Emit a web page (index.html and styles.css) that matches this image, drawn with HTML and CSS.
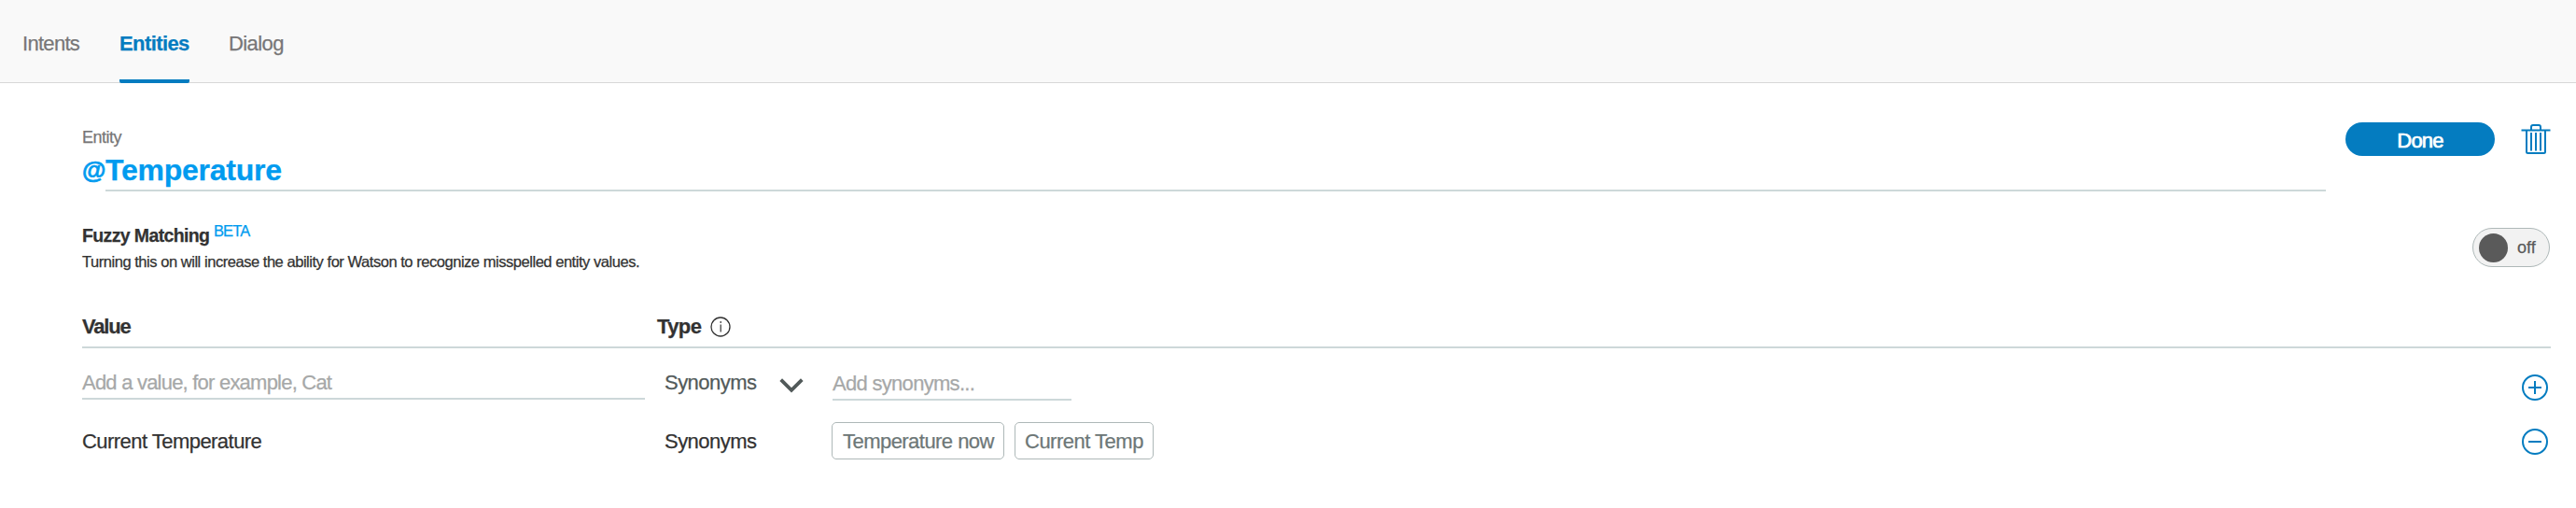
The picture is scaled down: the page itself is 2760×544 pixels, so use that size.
FILE: index.html
```html
<!DOCTYPE html>
<html lang="en">
<head>
<meta charset="utf-8">
<title>Entities</title>
<link rel="stylesheet" href="styles.css">
</head>
<body>
<nav class="tabs">
  <a class="tab tab-intents">Intents</a>
  <a class="tab tab-active">Entities</a>
  <a class="tab tab-dialog">Dialog</a>
</nav>
<main class="content">
  <section class="entity">
    <div class="entity-main">
      <div class="entity-label">Entity</div>
      <div class="entity-name"><span class="at">@</span><span class="name">Temperature</span></div>
    </div>
    <button class="done">Done</button>
    <svg class="trash" width="32" height="34" viewBox="0 0 32 34" fill="none" stroke="#047cc0" stroke-width="2">
      <path d="M.5 7.500h31M11 7V4q0-2 2-2h6q2 0 2 2v3M6 8v22.500q0 1.500 1.500 1.500h17q1.500 0 1.500-1.500V8"/>
      <path d="M11 10v19.500M16 10v19.500M21 10v19.500"/>
    </svg>
  </section>
  <section class="fuzzy">
    <div>
      <div class="fuzzy-head"><span class="fuzzy-title">Fuzzy Matching</span><span class="beta">BETA</span></div>
      <p class="fuzzy-text">Turning this on will increase the ability for Watson to recognize misspelled entity values.</p>
    </div>
    <div class="toggle"><span class="knob"></span><span class="off">off</span></div>
  </section>
  <section class="table">
    <div class="table-head">
      <span class="th-value">Value</span>
      <span class="th-type">Type</span>
      <svg class="info" width="22" height="22" viewBox="0 0 22 22" fill="none" stroke="#323232">
        <circle cx="11" cy="11" r="10" stroke-width="1.300"/>
        <path d="M11.200 8.500v8M11.200 5v2" stroke-width="1.200"/>
      </svg>
    </div>
    <div class="row row-new">
      <div class="field field-value">Add a value, for example, Cat</div>
      <div class="type select">Synonyms
        <svg class="chevron" width="26" height="16" viewBox="0 0 26 16" fill="none" stroke="#525a5a" stroke-width="3.800"><path d="M1.700 1.700 13 12.800 24.300 1.700"/></svg>
      </div>
      <div class="field field-syn">Add synonyms...</div>
      <svg class="action" width="28" height="28" viewBox="0 0 28 28" fill="none" stroke="#047cc0" stroke-width="2"><circle cx="14" cy="14" r="13"/><path d="M7 14h14M14 7v14"/></svg>
    </div>
    <div class="row row-item">
      <div class="value">Current Temperature</div>
      <div class="type">Synonyms</div>
      <div class="chips"><span class="chip chip-now">Temperature now</span><span class="chip chip-temp">Current Temp</span></div>
      <svg class="action" width="28" height="28" viewBox="0 0 28 28" fill="none" stroke="#047cc0" stroke-width="2"><circle cx="14" cy="14" r="13"/><path d="M7 14h14"/></svg>
    </div>
  </section>
</main>
</body>
</html>
```
FILE: styles.css
```css
* { box-sizing: border-box; }
body {
  margin: 0;
  height: 544px;
  background: #fff;
  color: #323232;
  font: 22px/25px "Liberation Sans", Arial, sans-serif;
  letter-spacing: -0.54px;
  white-space: nowrap;
  overflow: hidden;
  -webkit-text-stroke: 0.25px currentColor;
}
.tabs {
  display: flex;
  height: 89px;
  padding-left: 24px;
  background: #f9f9f9;
  border-bottom: 1px solid #d8d8d8;
}
.tab {
  height: 89px;
  padding-top: 34px;
  color: #777677;
}
.tab-intents { width: 104px; letter-spacing: -0.7px; }
.tab-active {
  width: 75px;
  margin-right: 42px;
  color: #047cc0;
  font-weight: bold;
  letter-spacing: -0.6px;
  background: linear-gradient(#047cc0, #047cc0) bottom / 100% 4px no-repeat;
  border-radius: 2px;
}
.tab-dialog { letter-spacing: -0.6px; }

.content { padding: 42px 27px 0 88px; }
.entity { display: flex; height: 111px; }
.entity-main { width: 2404px; }
.entity-label {
  margin-top: 4px;
  color: #777677;
  font-size: 18px;
  line-height: 24px;
  letter-spacing: -0.5px;
}
.entity-name {
  display: flex;
  height: 46px;
  color: #009bef;
  font-weight: bold;
  line-height: 46px;
}
.at { width: 25px; font-size: 26px; letter-spacing: 0; -webkit-text-stroke-width: 0.7px; }
.name {
  flex: 1;
  font-size: 32px;
  letter-spacing: -0.25px;
  border-bottom: 2px solid #cdd8d9;
}
.done {
  width: 160px;
  height: 36px;
  margin-left: 21px;
  padding: 2px 0 0;
  border: 0;
  border-radius: 18px;
  background: #047cc0;
  color: #fff;
  font: inherit;
  letter-spacing: -0.8px;
  -webkit-text-stroke: 0.7px #fff;
}
.trash { margin: 1px 0 0 28px; }

.fuzzy { display: flex; justify-content: space-between; height: 91px; }
.fuzzy-head { display: flex; height: 25px; }
.fuzzy-title {
  width: 141px;
  font-size: 19.500px;
  font-weight: bold;
  line-height: 21px;
  letter-spacing: -0.63px;
}
.beta {
  color: #009bef;
  font-size: 16.500px;
  line-height: 11px;
  letter-spacing: -0.9px;
}
.fuzzy-text {
  margin: 0;
  font-size: 16.500px;
  line-height: 26px;
  letter-spacing: -0.46px;
}
.toggle {
  display: flex;
  align-items: center;
  width: 83px;
  height: 42px;
  margin: 2px 1px 0 0;
  padding-left: 6px;
  border: 1px solid #aeb8b8;
  border-radius: 21px;
  background: #f2f2f2;
}
.knob { width: 31px; height: 31px; border-radius: 50%; background: #5a5a5a; }
.off { margin-left: 10px; font-size: 18px; color: #5a5a5a; letter-spacing: 0; }

.table-head {
  display: flex;
  height: 40px;
  padding-top: 4px;
  border-bottom: 2px solid #cdd8d9;
  font-weight: bold;
}
.th-value { width: 616px; letter-spacing: -1.2px; }
.th-type { width: 57px; letter-spacing: -0.6px; }
.info { margin-top: 2px; }
.row { display: grid; grid-template-columns: 624px 179px 1811px 28px; }
.row-new { height: 79px; padding-top: 23px; }
.row-item { height: 40px; }
.field { color: #a6a8a8; border-bottom: 2px solid #cdd8d9; }
.field-value { width: 603px; height: 32px; padding-top: 1px; letter-spacing: -0.78px; }
.field-syn {
  width: 256px;
  height: 32px;
  margin: 1px 0 0 1px;
  padding-top: 1px;
  letter-spacing: -0.7px;
}
.select { display: flex; padding-top: 1px; color: #525a5a; }
.chevron { margin: 8px 0 0 25px; }
.row-new .action { margin-top: 5px; }
.row-item { align-items: center; }
.row-item .action { margin-top: 2px; }
.chips { display: flex; gap: 11px; }
.chip {
  height: 40px;
  padding-left: 11px;
  border: 1px solid #aeb8b8;
  border-radius: 5px;
  color: #6d7777;
  line-height: 39px;
}
.chip-now { width: 185px; }
.chip-temp { width: 149px; padding-left: 10px; letter-spacing: -0.5px; }
```
